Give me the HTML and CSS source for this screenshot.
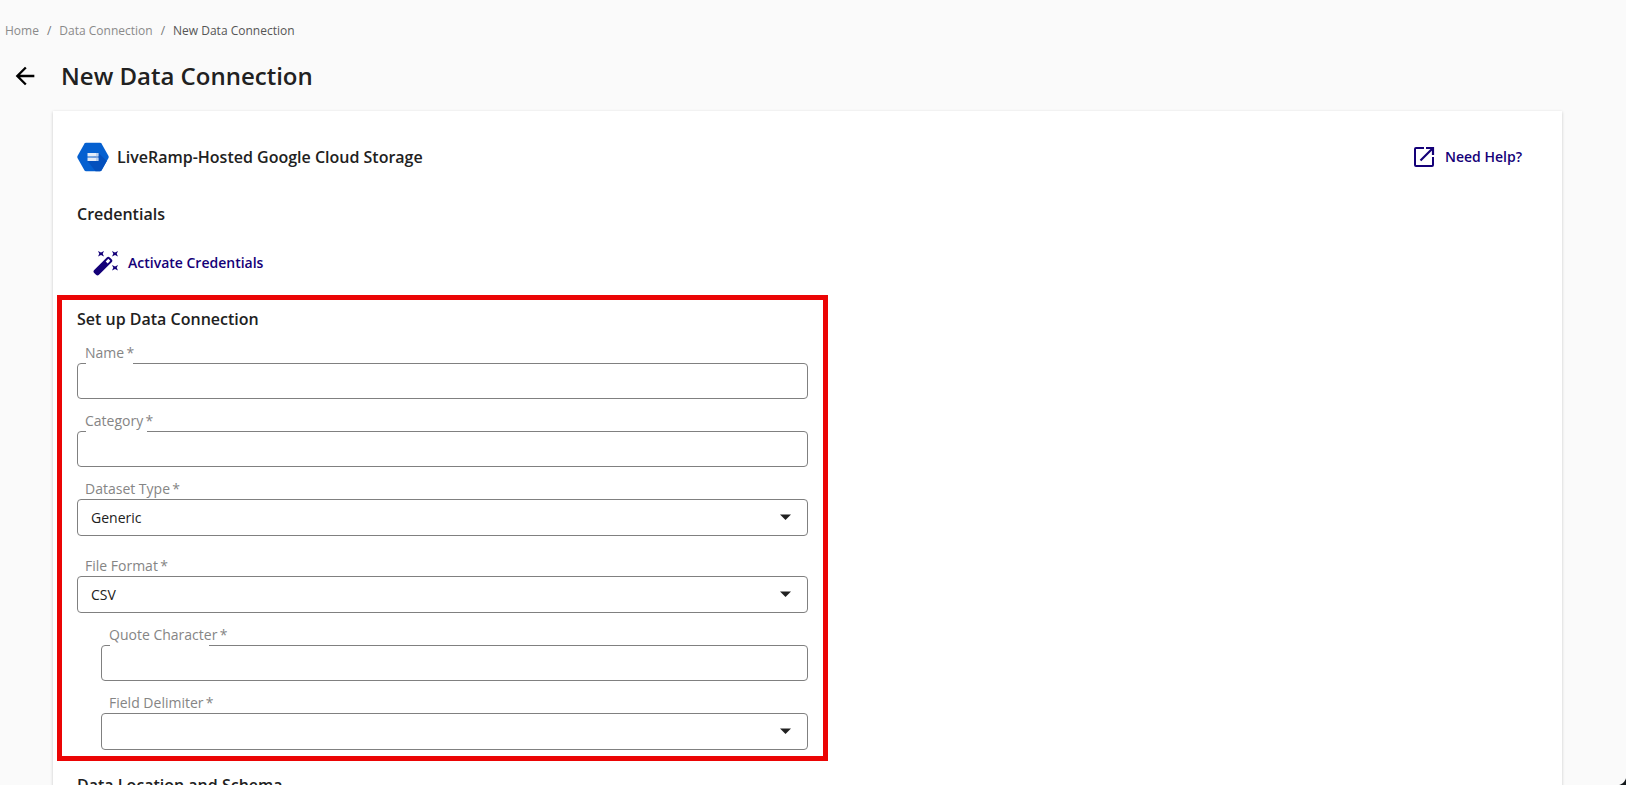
FILE: index.html
```
<!DOCTYPE html>
<html lang="en">
<head>
    <meta charset="UTF-8">
    <meta name="viewport" content="width=device-width, initial-scale=1.0">
    <title>New Data Connection</title>
    <link rel="stylesheet" href="styles.css">
</head>
<body>

    <nav class="breadcrumbs" aria-label="Breadcrumb">
        <a href="#">Home</a>
        <span>/</span>
        <a href="#">Data Connection</a>
        <span>/</span>
        <a class="current" href="#">New Data Connection</a>
    </nav>

    <header class="page-header">
        <button class="back" type="button" aria-label="Back">
            <svg width="28" height="28" viewBox="0 0 24 24"><path d="M20 11H7.830l5.590-5.590L12 4l-8 8 8 8 1.410-1.410L7.830 13H20z"/></svg>
        </button>
        <h1>New Data Connection</h1>
    </header>

    <main class="card">
        <div class="card-header">
            <svg class="logo" width="32" height="30" viewBox="0 0 32 30">
                <path fill="#0560d0" d="M9 .8h14q1 0 1.500.8l7 12.400q.5 1 0 2l-7 12.400q-.5.800-1.500.800H9q-1 0-1.500-.8L.5 16q-.5-1 0-2L7.500 1.600Q8 .8 9 .8z"/>
                <path fill="#0450bd" d="M21.500 11l8.300 8-5.300 9.400q-.5.800-1.500.800h-4.500L10.500 19z"/>
                <path fill="#e4ecf8" d="M10.500 11h11v3.500h-11zM10.500 15.500h11V19h-11z"/>
                <path fill="#8fb4e6" d="M19.500 11h1v3.500h-1zM19.500 15.500h1V19h-1z"/>
            </svg>
            <h2>LiveRamp-Hosted Google Cloud Storage</h2>
            <a class="action help" href="#">
                <svg width="24" height="24" viewBox="0 0 24 24" fill="none" stroke="currentColor" stroke-width="2">
                    <path d="M12 3H4Q3 3 3 4v16q0 1 1 1h16q1 0 1-1v-8"/>
                    <path d="M14 3h7v7M21 3L8.500 15.500" stroke-width="2.200"/>
                </svg>
                Need Help?
            </a>
        </div>

        <h2>Credentials</h2>
        <button class="action activate" type="button">
            <svg width="26" height="26" viewBox="0 0 26 26">
                <path fill="currentColor" fill-rule="evenodd" d="M1.200 20L13.800 7.400q1.500-1.500 3 0l1.800 1.800q1.500 1.500 0 3L6 24.800q-1.500 1.500-3 0L1.200 23q-1.500-1.500 0-3zM15.300 8.800l-2.600 2.600 2 2 2.600-2.600z"/>
                <path fill="currentColor" d="M5 1l3 1.500L11 1 9.700 3.800 11 6.500 8 5.100 5 6.500l1.300-2.700zM19 1l3 1.500L25 1l-1.300 2.800L25 6.500l-3-1.400-3 1.400 1.300-2.700zM19 15l3 1.500 3-1.500-1.300 2.800 1.300 2.700-3-1.400-3 1.400 1.300-2.700z"/>
            </svg>
            Activate Credentials
        </button>

        <section class="setup">
            <h2>Set up Data Connection</h2>

            <div class="field">
                <label for="name">Name&thinsp;*</label>
                <input id="name" type="text">
            </div>
            <div class="field">
                <label for="category">Category&thinsp;*</label>
                <input id="category" type="text">
            </div>
            <div class="field spaced">
                <label for="dataset-type">Dataset Type&thinsp;*</label>
                <div class="select">
                    <select id="dataset-type"><option>Generic</option></select>
                    <svg width="24" height="24" viewBox="0 0 24 24"><path d="M6 9.500h11L11.500 15z"/></svg>
                </div>
            </div>
            <div class="field">
                <label for="file-format">File Format&thinsp;*</label>
                <div class="select">
                    <select id="file-format"><option>CSV</option></select>
                    <svg width="24" height="24" viewBox="0 0 24 24"><path d="M6 9.500h11L11.500 15z"/></svg>
                </div>
            </div>
            <div class="field nested">
                <label for="quote">Quote Character&thinsp;*</label>
                <input id="quote" type="text">
            </div>
            <div class="field nested">
                <label for="delimiter">Field Delimiter&thinsp;*</label>
                <div class="select">
                    <select id="delimiter"><option></option></select>
                    <svg width="24" height="24" viewBox="0 0 24 24"><path d="M6 9.500h11L11.500 15z"/></svg>
                </div>
            </div>
        </section>

        <h2>Data Location and Schema</h2>
    </main>

    <div class="window-corner"></div>

</body>
</html>
```
FILE: styles.css
```
* {
    box-sizing: border-box;
}
body {
    height: 100vh;
    margin: 0;
    overflow: hidden;
    font-family: "Open Sans", "Noto Sans", sans-serif;
    font-size: 14px;
    color: #212121;
    background-color: #fafafa;
}
h1, h2 {
    margin: 0;
    font-weight: 600;
}
h1 {
    font-size: 24px;
    line-height: 32px;
}
h2 {
    font-size: 16px;
    line-height: 24px;
}
.breadcrumbs {
    display: flex;
    gap: 8px;
    padding: 22px 5px 0;
    font-size: 12px;
    line-height: 18px;
    color: #757575;
}
.breadcrumbs a {
    color: #8a8a8a;
    text-decoration: none;
}
.breadcrumbs .current {
    color: #555;
}
.page-header {
    display: flex;
    align-items: center;
    gap: 22px;
    padding: 20px 11px 19px;
}
.back {
    display: flex;
    padding: 0;
    border: none;
    background: none;
    cursor: pointer;
}
.card {
    margin: 0 64px 0 53px;
    padding: 30px 24px;
    background-color: #fff;
    box-shadow: 0 1px 3px rgba(0, 0, 0, 0.2);
}
.card-header {
    display: flex;
    align-items: center;
    gap: 8px;
    height: 32px;
    margin-bottom: 29px;
}
.action {
    display: flex;
    align-items: center;
    padding: 0;
    border: none;
    background: none;
    font-family: inherit;
    font-size: 14px;
    font-weight: 600;
    line-height: 24px;
    color: #140078;
    text-decoration: none;
    cursor: pointer;
}
.help {
    gap: 9px;
    margin-left: auto;
    margin-right: 16px;
}
.activate {
    gap: 9px;
    margin: 24px 0 19px 16px;
}
.setup {
    width: calc(50% + 40px);
    margin: 0 -20px 12px;
    padding: 7px 15px 6px;
    border: 5px solid #eb0505;
}
.setup h2 {
    margin-bottom: 12px;
}
.field {
    margin-bottom: 12px;
}
.field.spaced {
    margin-bottom: 20px;
}
.field.nested {
    margin-left: 24px;
}
.field:last-child {
    margin-bottom: 0;
}
.field label {
    display: block;
    position: relative;
    width: fit-content;
    margin-left: 8px;
    line-height: 20px;
    color: #858585;
}
/* gap in the outline under the label */
.field label::after {
    content: "";
    position: absolute;
    top: 100%;
    left: 1px;
    width: calc(75% + 10px);
    height: 1px;
    background-color: #fff;
}
.field input,
.field select {
    display: block;
    width: 100%;
    height: 36px;
    padding: 0 13px;
    border: 1px solid #808080;
    border-radius: 4px;
    background-color: #fff;
    font-family: inherit;
    font-size: 14px;
    color: #212121;
}
.field select {
    height: 37px;
    appearance: none;
}
.select {
    position: relative;
}
.select svg {
    position: absolute;
    top: 6px;
    right: 10px;
    fill: #212121;
    pointer-events: none;
}
.window-corner {
    position: fixed;
    right: 0;
    bottom: 0;
    width: 10px;
    height: 10px;
    background: radial-gradient(circle at 0 0, transparent 10px, #14191c 11px);
}
```
